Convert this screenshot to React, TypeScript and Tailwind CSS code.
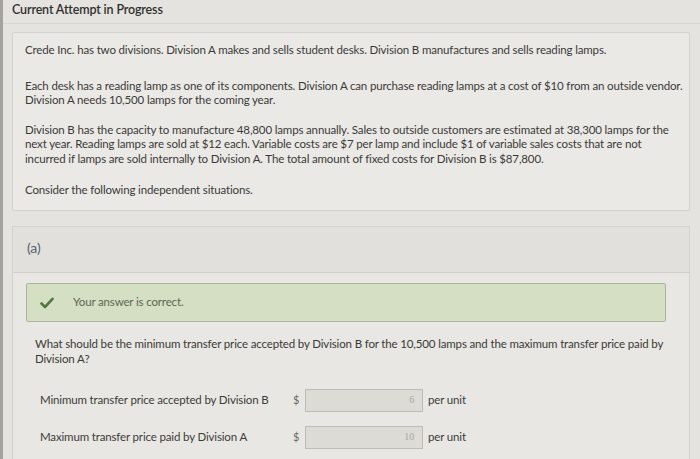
import React from "react";

function Check() {
  return (
    <svg width="14" height="12" viewBox="0 0 14 12" className="shrink-0">
      <path d="M1.5 6.5 L5 10 L12.5 1.8" fill="none" stroke="#4f7a3a" strokeWidth="2.6" strokeLinecap="round" strokeLinejoin="round" />
    </svg>
  );
}

function Row({ label, value }: { label: string; value: string }) {
  return (
    <div className="flex items-center h-[23px]">
      <div className="w-[258px] pl-[5px] text-[#3c3c3a]">{label}</div>
      <div className="w-[12px] text-[#6a6a66] text-[11px]">$</div>
      <div className="w-[118px] h-[23px] border border-[#bdbcb6] bg-[#dcdbd5] flex items-center justify-end pr-[8px] text-[#a9a8a3] text-[10px] font-['Liberation_Serif',serif]">
        {value}
      </div>
      <div className="pl-[5px] text-[#3c3c3a]">per unit</div>
    </div>
  );
}

export default function App() {
  return (
    <div className="w-[700px] h-[459px] overflow-hidden bg-[#e4e3df] border-l-[3px] border-[#a3a29e] font-['Lato','Noto_Sans',sans-serif] text-[11.5px] leading-[14.5px] text-[#3a3a38] tracking-[-0.15px]">
      <div className="h-[24px] pl-[9px] pt-[2px] border-b border-[#d6d5d1] text-[12.5px] font-semibold text-[#2f2f2e] leading-[16px]">
        Current Attempt in Progress
      </div>
      <div className="ml-[9px] mr-[10px] mt-[8px] h-[179px] border border-[#d3d2ce] rounded-[2px] bg-[#eae9e6] pl-[12px] pt-[10px]">
        <p>Crede Inc. has two divisions. Division A makes and sells student desks. Division B manufactures and sells reading lamps.</p>
        <p className="mt-[21px]">
          Each desk has a reading lamp as one of its components. Division A can purchase reading lamps at a cost of $10 from an outside vendor.
          <br />
          Division A needs 10,500 lamps for the coming year.
        </p>
        <p className="mt-[15px]">
          Division B has the capacity to manufacture 48,800 lamps annually. Sales to outside customers are estimated at 38,300 lamps for the
          <br />
          next year. Reading lamps are sold at $12 each. Variable costs are $7 per lamp and include $1 of variable sales costs that are not
          <br />
          incurred if lamps are sold internally to Division A. The total amount of fixed costs for Division B is $87,800.
        </p>
        <p className="mt-[17px]">Consider the following independent situations.</p>
      </div>
      <div className="ml-[9px] mr-[10px] mt-[15px] h-[240px] border border-[#d3d2ce] bg-[#e8e7e3]">
        <div className="h-[46px] bg-[#e1e0dc] border-b border-[#d0cfcb] pl-[14px] pt-[12px] text-[14px] leading-[18px] text-[#56616e]">
          (a)
        </div>
        <div className="ml-[13px] mr-[23px] mt-[10px] h-[39px] border border-[#a9b59b] rounded-[2px] bg-[#d5dfc3] flex items-center pl-[13px]">
          <Check />
          <span className="ml-[19px] text-[#5b6650]">Your answer is correct.</span>
        </div>
        <div className="pl-[22px] mt-[15px]">
          <p>
            What should be the minimum transfer price accepted by Division B for the 10,500 lamps and the maximum transfer price paid by
            <br />
            Division A?
          </p>
          <div className="mt-[23px] flex flex-col gap-[14px]">
            <Row label="Minimum transfer price accepted by Division B" value="6" />
            <Row label="Maximum transfer price paid by Division A" value="10" />
          </div>
        </div>
      </div>
    </div>
  );
}
